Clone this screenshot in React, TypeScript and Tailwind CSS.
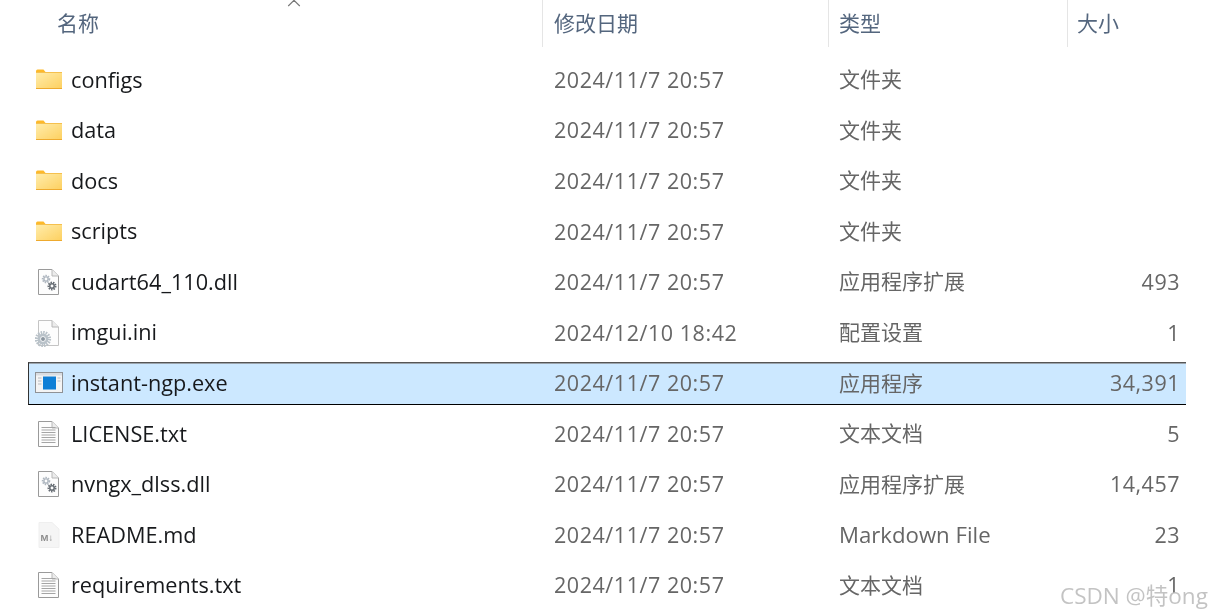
import { ChevronUp } from "lucide-react";

type Kind = "folder" | "dll" | "ini" | "exe" | "txt" | "md";

const rows: { name: string; date: string; type: string; size: string; kind: Kind; selected?: boolean }[] = [
  { name: "configs", date: "2024/11/7 20:57", type: "文件夹", size: "", kind: "folder" },
  { name: "data", date: "2024/11/7 20:57", type: "文件夹", size: "", kind: "folder" },
  { name: "docs", date: "2024/11/7 20:57", type: "文件夹", size: "", kind: "folder" },
  { name: "scripts", date: "2024/11/7 20:57", type: "文件夹", size: "", kind: "folder" },
  { name: "cudart64_110.dll", date: "2024/11/7 20:57", type: "应用程序扩展", size: "493", kind: "dll" },
  { name: "imgui.ini", date: "2024/12/10 18:42", type: "配置设置", size: "1", kind: "ini" },
  { name: "instant-ngp.exe", date: "2024/11/7 20:57", type: "应用程序", size: "34,391", kind: "exe", selected: true },
  { name: "LICENSE.txt", date: "2024/11/7 20:57", type: "文本文档", size: "5", kind: "txt" },
  { name: "nvngx_dlss.dll", date: "2024/11/7 20:57", type: "应用程序扩展", size: "14,457", kind: "dll" },
  { name: "README.md", date: "2024/11/7 20:57", type: "Markdown File", size: "23", kind: "md" },
  { name: "requirements.txt", date: "2024/11/7 20:57", type: "文本文档", size: "1", kind: "txt" },
];

function Sheet({ stroke = "#9a9a9a" }: { stroke?: string }) {
  return (
    <>
      <path d="M3.5 1.5H17L23.5 8V26.5H3.5Z" fill="#fdfdfd" stroke={stroke} />
      <path d="M17 1.5V8H23.5" fill="#ececec" stroke="#b8b8b8" />
    </>
  );
}

function Gear({ x, y, r, color }: { x: number; y: number; r: number; color: string }) {
  return (
    <>
      <circle cx={x} cy={y} r={r} fill="none" stroke={color} strokeWidth={r * 0.5} strokeDasharray="1.5 1" />
      <circle cx={x} cy={y} r={r * 0.62} fill="none" stroke={color} strokeWidth={r * 0.42} />
    </>
  );
}

function FileIcon({ kind }: { kind: Kind }) {
  if (kind === "folder") {
    return (
      <svg width="28" height="22" viewBox="0 0 28 22" className="-mt-[2px] block">
        <defs>
          <linearGradient id="folderFill" x1="0" y1="0" x2="1" y2="1">
            <stop offset="0" stopColor="#ffecaa" />
            <stop offset="1" stopColor="#fdd060" />
          </linearGradient>
        </defs>
        <path d="M1 3.5Q1 1.5 2.5 1.5H8.5L10.5 4H1Z" fill="#fdb92a" />
        <rect x="1" y="4" width="26" height="1.5" fill="#f5c04e" />
        <rect x="1" y="5" width="26" height="15.5" fill="url(#folderFill)" />
        <rect x="1" y="20" width="26" height="1" fill="#eeaa2e" />
      </svg>
    );
  }
  if (kind === "exe") {
    return (
      <svg width="28" height="24" viewBox="0 0 28 24" className="-mt-[2px] block">
        <rect x="0.5" y="2.5" width="27" height="20" fill="#f4f4f4" stroke="#8f9296" />
        <rect x="1" y="3" width="26" height="2.5" fill="#d9dde2" />
        <rect x="8" y="6.5" width="13" height="13" fill="#0f7fd6" />
        <path d="M3 8H6.5M3 11H6.5M3 14H6.5M22.5 8H25.5M22.5 11H25.5" stroke="#b8bcc2" />
      </svg>
    );
  }
  return (
    <svg width="28" height="28" viewBox="0 0 28 28" className="block">
      {kind === "md" ? (
        <>
          <path d="M4 1.5H17L24 8V26.5H4Z" fill="#f5f5f5" stroke="#efefef" />
          <text x="5.5" y="19.5" fontSize="9.5" fontWeight="700" fill="#8c8c8c" fontFamily="Liberation Sans, sans-serif">
            M↓
          </text>
        </>
      ) : (
        <Sheet stroke={kind === "ini" ? "#c4c4c4" : "#9a9a9a"} />
      )}
      {kind === "dll" && (
        <>
          <Gear x={11} y={11} r={3.4} color="#aeb6bf" />
          <Gear x={17} y={18} r={3.6} color="#666c73" />
        </>
      )}
      {kind === "ini" && (
        <>
          <Gear x={8} y={20} r={6.5} color="#b9c2c9" />
          <circle cx={8} cy={20} r={2} fill="#8b96a0" />
        </>
      )}
      {kind === "txt" && (
        <path d="M6.5 7.5H20.5M6.5 10H20.5M6.5 12.5H20.5M6.5 15H20.5M6.5 17.5H20.5M6.5 20H20.5M6.5 22.5H20.5" stroke="#a5a5a5" />
      )}
    </svg>
  );
}

export default function App() {
  return (
    <div className="relative h-[615px] w-[1212px] overflow-hidden bg-white blur-[0.35px] font-['Open_Sans','Noto_Sans_CJK_SC',sans-serif]">
      {/* Column headers */}
      <div className="relative flex h-[47px] text-[21px] text-[#54667e] font-['Noto_Sans_CJK_SC',sans-serif]">
        <div className="w-[542px] pl-[57px] pt-[7px]">名称</div>
        <div className="w-[286px] border-l border-[#e5e5e5] pl-[11px] pt-[7px]">修改日期</div>
        <div className="w-[239px] border-l border-[#e5e5e5] pl-[10px] pt-[7px]">类型</div>
        <div className="flex-1 border-l border-[#e5e5e5] pl-[9px] pt-[7px]">大小</div>
        <ChevronUp className="absolute left-[283px] top-[-8px] h-[22px] w-[22px] text-[#777777]" strokeWidth={1.2} />
      </div>

      {/* File rows */}
      <div className="ml-[28px] mt-[11.5px] w-[1158px]">
        {rows.map((row) => (
          <div
            key={row.name}
            className={
              row.selected
                ? "mb-[7.55px] grid h-[43px] grid-cols-[525px_285px_1fr] items-center border-y border-l border-t-[#555555] border-b-black border-l-[#333333] bg-[#cce8ff] pr-[6px] shadow-[inset_0_1px_0_#9aa4ad]"
                : "mb-[7.55px] grid h-[43px] grid-cols-[525px_285px_1fr] items-center border-y border-l border-transparent pr-[6px]"
            }
          >
            <div className="flex items-center pl-[6px] text-[21.7px] text-[#17191c]">
              <span className="flex w-[36px] shrink-0">
                <FileIcon kind={row.kind} />
              </span>
              {row.name}
            </div>
            <div className="text-[21.5px] tracking-[0.55px] text-[#666666]">{row.date}</div>
            <div className="flex items-center justify-between text-[21px] text-[#666666]">
              <span className={row.kind === "md" ? "text-[22.2px]" : ""}>{row.type}</span>
              <span className="text-[21.5px] tracking-[0.5px]">{row.size}</span>
            </div>
          </div>
        ))}
      </div>

      <div className="absolute left-[1060px] top-[579px] whitespace-nowrap text-[22.5px] text-[#bdbdbd]/90">CSDN @特ong</div>
    </div>
  );
}
